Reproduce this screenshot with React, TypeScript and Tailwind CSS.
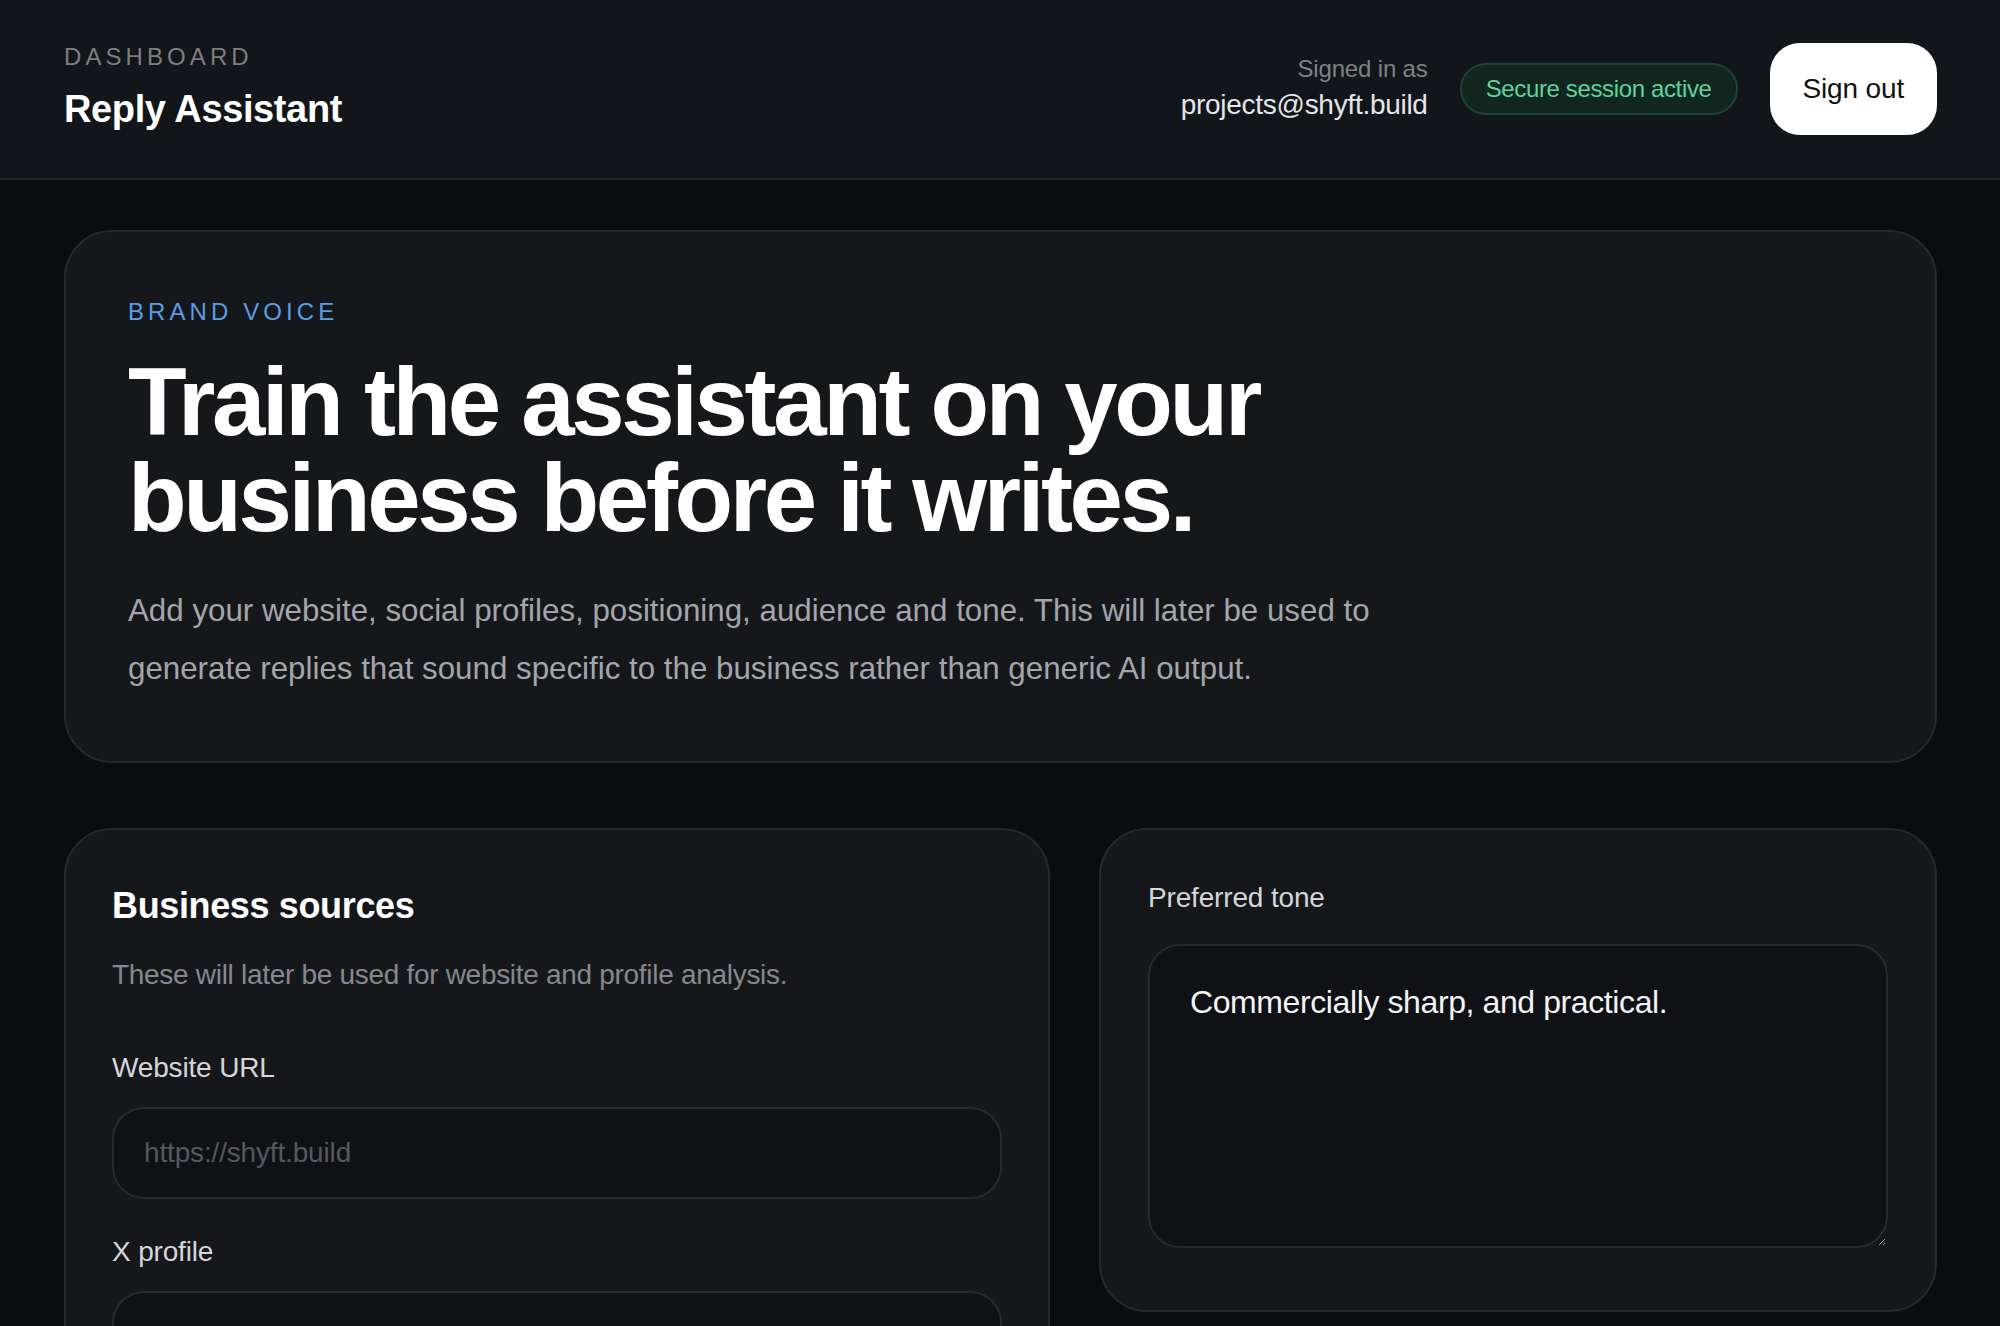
import React from "react";

export default function App() {
  return (
    <div className="min-h-screen bg-[#0a0c10] font-['Liberation_Sans',Arial,sans-serif] tracking-[-0.01em] text-white">
      <header className="flex h-[180px] items-center justify-between border-b-2 border-[#24272c] bg-[#121519] pl-[64px] pr-[63px]">
        <div className="flex flex-col pb-[2px]">
          <span className="text-[24px] leading-[32px] tracking-[0.17em] text-[#7c7f85] uppercase">Dashboard</span>
          <span className="mt-[10px] text-[38px] leading-[53px] font-bold tracking-[-0.01em] text-white">Reply Assistant</span>
        </div>
        <div className="flex items-center gap-[32px]">
          <div className="flex flex-col items-end text-right">
            <span className="text-[24px] leading-[32px] text-[#7f8288]">Signed in as</span>
            <span className="text-[28px] leading-[40px] tracking-[-0.01em] text-[#e4e6ea]">projects@shyft.build</span>
          </div>
          <span className="rounded-full border-2 border-[#1d4436] bg-[#10261f] px-[24px] py-[8px] text-[24px] leading-[32px] tracking-[-0.015em] text-[#5fd3a0]">
            Secure session active
          </span>
          <button className="flex h-[92px] items-center rounded-[30px] bg-white px-[33px] text-[28px] leading-[40px] text-[#111111]">
            Sign out
          </button>
        </div>
      </header>

      <main className="pl-[64px] pr-[63px] pt-[50px] pb-[64px]">
        <section className="rounded-[48px] border-2 border-[#25282d] bg-[#15171b] px-[62px] pt-[64px] pb-[64px]">
          <p className="text-[24px] leading-[32px] tracking-[0.17em] text-[#5a9de6] uppercase">Brand voice</p>
          <h1 className="mt-[26px] max-w-[1536px] text-[96px] leading-[96px] font-bold tracking-[-0.035em] text-white">
            Train the assistant on your business before it writes.
          </h1>
          <p className="mt-[36px] max-w-[1344px] text-[31.3px] leading-[57.6px] tracking-normal text-[#a3a6ab]">
            Add your website, social profiles, positioning, audience and tone. This will later be used to generate replies that sound specific to the business rather than generic AI output.
          </p>
        </section>

        <div className="mt-[65px] grid grid-cols-[986px_1fr] items-start gap-[49px]">
          <section className="rounded-[48px] border-2 border-[#25282d] bg-[#15171b] px-[46px] pt-[48px] pb-[48px]">
            <h2 className="text-[36px] leading-[56px] font-bold tracking-[-0.01em] text-white">Business sources</h2>
            <p className="mt-[21px] text-[28px] leading-[40px] tracking-[-0.3px] text-[#85888e]">
              These will later be used for website and profile analysis.
            </p>
            <div className="mt-[53px] flex flex-col">
              <label className="text-[28px] leading-[40px] text-[#d4d6da]">Website URL</label>
              <input
                className="mt-[19px] block h-[92px] w-full rounded-[32px] border-2 border-[#262a2f] bg-[#0f1114] px-[30px] text-[28px] text-white outline-none placeholder:text-[#55585e]"
                placeholder="https://shyft.build"
              />
            </div>
            <div className="mt-[33px] flex flex-col">
              <label className="text-[28px] leading-[40px] text-[#d4d6da]">X profile</label>
              <input
                className="mt-[19px] block h-[92px] w-full rounded-[32px] border-2 border-[#262a2f] bg-[#0f1114] px-[30px] text-[28px] text-white outline-none placeholder:text-[#55585e]"
                placeholder="https://x.com/shyft"
              />
            </div>
            <div className="mt-[33px] flex flex-col">
              <label className="text-[28px] leading-[40px] text-[#d4d6da]">LinkedIn profile</label>
              <input
                className="mt-[19px] block h-[92px] w-full rounded-[32px] border-2 border-[#262a2f] bg-[#0f1114] px-[30px] text-[28px] text-white outline-none placeholder:text-[#55585e]"
                placeholder="https://linkedin.com/company/shyft"
              />
            </div>
          </section>

          <section className="rounded-[48px] border-2 border-[#25282d] bg-[#15171b] px-[47px] pt-[48px] pb-[62px]">
            <label className="block text-[28px] leading-[40px] text-[#d4d6da]">Preferred tone</label>
            <textarea
              className="mt-[26px] block h-[304px] w-full rounded-[32px] border-2 border-[#262a2f] bg-[#0f1114] px-[40px] py-[32px] text-[32px] leading-[48px] tracking-[-0.4px] text-[#f3f4f6] outline-none"
              defaultValue="Commercially sharp, and practical."
            />
          </section>
        </div>
      </main>
    </div>
  );
}
